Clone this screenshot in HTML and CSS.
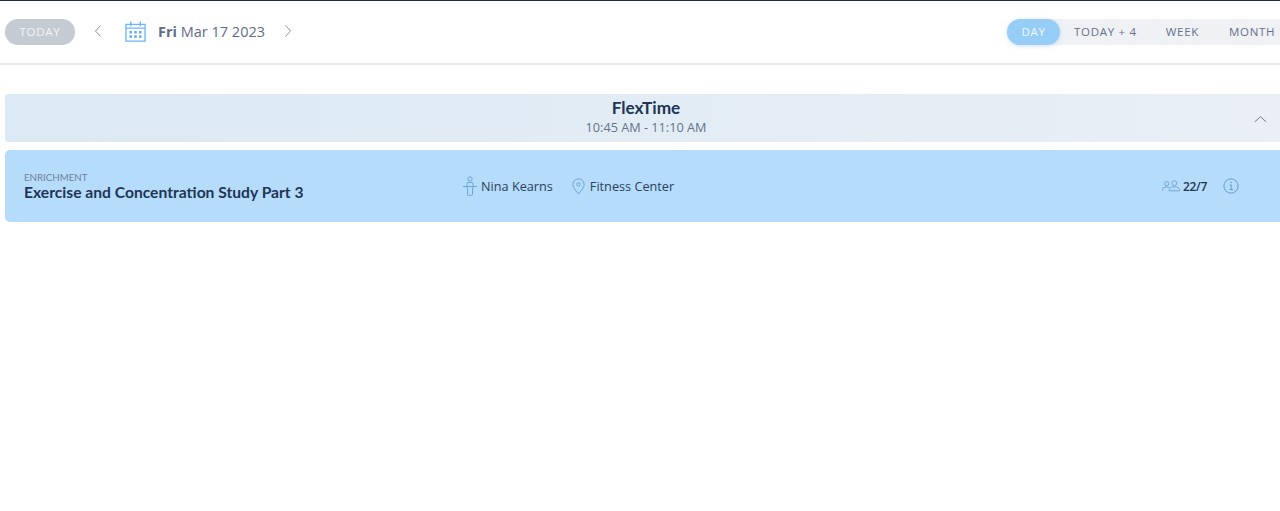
FILE: index.html
```html
<!DOCTYPE html>
<html lang="en">
<head>
<meta charset="utf-8">
<title>FlexTime</title>
<link rel="stylesheet" href="styles.css">
</head>
<body>
<header class="toolbar">
  <div class="nav">
    <button class="today">TODAY</button>
    <svg class="chev chev-left" viewBox="0 0 10 14"><path d="M7.500 1.500 2.500 7 7.500 12.500"/></svg>
    <svg class="cal" viewBox="0 0 22 22"><path d="M1 3.500h20v17.500H1zM1 7.500h20M6 .5v5M16 .5v5"/><g class="dots"><rect x="4.700" y="10.500" width="2.600" height="2.600"/><rect x="9.700" y="10.500" width="2.600" height="2.600"/><rect x="14.700" y="10.500" width="2.600" height="2.600"/><rect x="4.700" y="15" width="2.600" height="2.600"/><rect x="9.700" y="15" width="2.600" height="2.600"/><rect x="14.700" y="15" width="2.600" height="2.600"/></g></svg>
    <div class="date"><b>Fri</b> Mar 17 2023</div>
    <svg class="chev chev-right" viewBox="0 0 10 14"><path d="M2.500 1.500 7.500 7 2.500 12.500"/></svg>
  </div>
  <div class="views">
    <span class="view active">DAY</span>
    <span class="view v2">TODAY + 4</span>
    <span class="view v3">WEEK</span>
    <span class="view v4">MONTH</span>
  </div>
</header>
<main class="content">
  <section class="group">
    <div class="group-text">
      <h2>FlexTime</h2>
      <p>10:45 AM - 11:10 AM</p>
    </div>
    <svg class="collapse" viewBox="0 0 14 8"><path d="M1 7 7 1.500 13 7"/></svg>
  </section>
  <section class="card">
    <div class="title-col">
      <div class="kicker">ENRICHMENT</div>
      <div class="title">Exercise and Concentration Study Part 3</div>
    </div>
    <div class="meta">
      <svg class="ic-teacher" viewBox="0 0 14 20"><circle cx="7" cy="3" r="2.200"/><path d="M0 10.500h14M4 7.500q0-1 1-1h4q1 0 1 1v4l-.5 1.500v5.500q0 .8-.8.8H5.300q-.8 0-.8-.8V13L4 11.500z"/></svg>
      <span class="teacher">Nina Kearns</span>
      <svg class="ic-pin" viewBox="0 0 14 18"><path d="M7 17C3.500 12.800 1 10 1 6.800a6 6 0 0 1 12 0C13 10 10.500 12.800 7 17z"/><circle cx="7" cy="6.800" r="1.800"/></svg>
      <span class="place">Fitness Center</span>
    </div>
    <div class="stats">
      <svg class="ic-people" viewBox="0 0 20 12"><circle cx="5" cy="3.500" r="2.200"/><path d="M.6 11V9.500c0-1.500 2-2.400 4.400-2.400 1 0 1.900.2 2.600.5"/><circle cx="13" cy="3" r="2.500"/><path d="M7.500 11V9.600c0-1.700 2.400-2.800 5.500-2.800s5.500 1.100 5.500 2.800V11z"/></svg>
      <span class="count">22/7</span>
      <svg class="ic-info" viewBox="0 0 18 18"><circle cx="9" cy="9" r="8"/><path d="M7.500 7.800H9.300V13M7.300 13h4"/><circle class="dot" cx="9" cy="5.100" r=".8"/></svg>
    </div>
  </section>
</main>
</body>
</html>
```
FILE: styles.css
```css
* { box-sizing: border-box; }
html, body { margin: 0; padding: 0; background: #fff; }
body {
  height: 511px;
  overflow: hidden;
  font-family: "Open Sans", sans-serif;
  color: #1f3556;
  border-top: 1px solid #1d2f3f;
}
.toolbar {
  height: 64px;
  border-bottom: 2px solid #e9ebee;
  display: flex;
  justify-content: space-between;
  align-items: flex-start;
  padding: 18px 0 0 5px;
}
.nav { display: flex; align-items: center; height: 26px; }
.today {
  width: 70px;
  height: 26px;
  border: 0;
  border-radius: 13px;
  background: #c5cbd2;
  color: #f2f4f6;
  font: 400 11.500px "Open Sans", sans-serif;
  letter-spacing: .7px;
  padding: 0 0 2px;
}
svg { display: block; fill: none; flex-shrink: 0; }
.chev { width: 10px; height: 14px; margin-bottom: 2px; stroke: #8995aa; stroke-width: 1; }
.chev-left { margin-left: 18px; }
.cal { width: 21px; height: 21px; margin: 0 0 2px 22px; stroke: #6ab6f7; stroke-width: 1.4; }
.cal .dots { fill: #58adf5; stroke: none; }
.date { margin-left: 12px; padding-bottom: 2px; font-size: 14.500px; color: #5f6c89; white-space: nowrap; }
.date b { font-weight: 700; }
.chev-right { margin-left: 18px; }
.views {
  display: flex;
  align-items: center;
  height: 26px;
  width: 273px;
  background: #eff1f4;
  border-radius: 13px 0 0 13px;
  font-size: 11.500px;
  letter-spacing: .7px;
  color: #66728c;
  white-space: nowrap;
}
.view { flex-shrink: 0; padding-bottom: 2px; }
.view.active {
  width: 53px;
  height: 26px;
  border-radius: 13px;
  background: #97cef7;
  color: #f1f8fe;
  display: flex;
  align-items: center;
  justify-content: center;
  box-shadow: 0 1px 4px rgba(120,170,230,.35);
}
.v2 { margin-left: 14px; }
.v3 { margin-left: 29px; }
.v4 { margin-left: 30px; }
.content { padding: 29px 0 0 5px; }
.group {
  position: relative;
  height: 48px;
  border-radius: 4px 0 0 4px;
  background: linear-gradient(90deg, #dbe9f5, #e9eff5);
  display: flex;
  justify-content: center;
  padding: 4px 0 0 7px;
  text-align: center;
}
.group h2 {
  margin: 0;
  font: 700 17.200px/20px "Lato", sans-serif;
  color: #1f3556;
}
.group p {
  margin: 1px 0 0;
  font-size: 12.700px;
  line-height: 16px;
  color: #66728c;
}
.collapse {
  position: absolute;
  right: 13px;
  top: 21px;
  width: 13px;
  height: 8px;
  stroke: #66728c;
  stroke-width: 1;
}
.card {
  margin-top: 8px;
  height: 72px;
  border-radius: 5px 0 0 5px;
  background: #b5dcfb;
  display: flex;
  align-items: center;
  padding-left: 19px;
}
.title-col { width: 439px; padding-top: 1px; }
.kicker { font: 400 9.700px/11px "Lato", sans-serif; color: #71809a; }
.title { font: 700 15.650px/19px "Lato", sans-serif; color: #1f3556; white-space: nowrap; }
.meta { display: flex; align-items: center; font-size: 12.700px; color: #2b3f60; width: 699px; }
.ic-teacher { width: 14px; height: 20px; stroke: #6a9fd0; stroke-width: .9; }
.teacher { margin-left: 4px; }
.ic-pin { width: 13px; height: 17px; margin-left: 19px; stroke: #6a9fd0; stroke-width: 1; }
.place { margin-left: 5px; }
.stats { display: flex; align-items: center; font-size: 12px; color: #1f3556; }
.ic-people { width: 19px; height: 12px; stroke: #6a9fd0; stroke-width: .9; }
.count { margin-left: 2px; font-weight: 600; letter-spacing: -.3px; }
.ic-info { width: 16px; height: 16px; margin-left: 16px; stroke: #5b95c8; stroke-width: 1; }
.ic-info .dot { fill: #5b95c8; stroke: none; }
```
